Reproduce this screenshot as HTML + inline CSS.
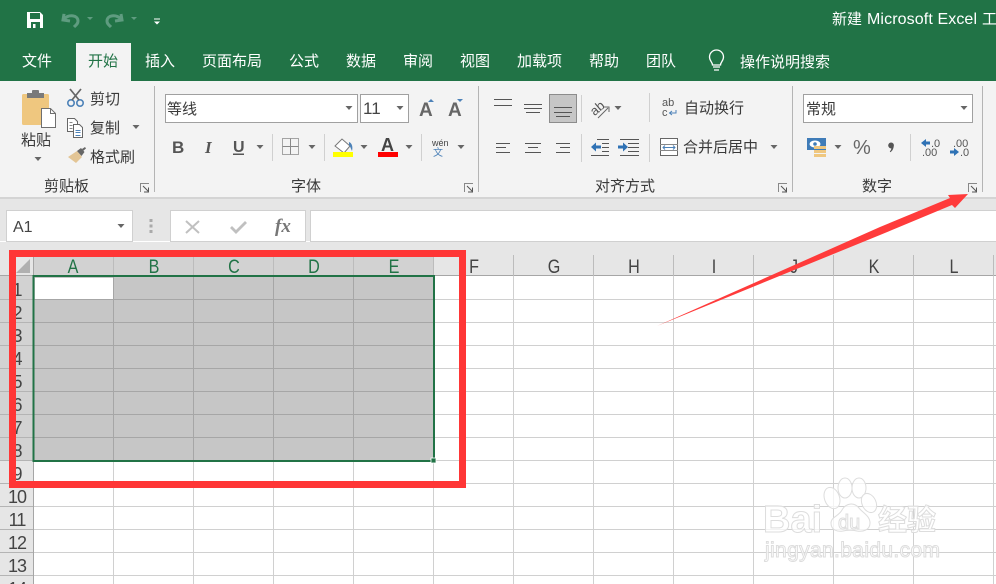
<!DOCTYPE html>
<html><head><meta charset="utf-8"><style>
html,body{margin:0;padding:0;background:#fff;overflow:hidden}
svg{display:block}
text{font-family:"Liberation Sans","Noto Sans CJK SC",sans-serif;fill:#333;font-size:15px}
.tab{fill:#fff;font-size:15px}
.rb{font-size:15px;fill:#3a3a3a}
.col{font-size:19px;text-anchor:middle;fill:#444;transform-box:fill-box;transform-origin:center;transform:scaleX(.85)}
.cs{fill:#217346}
.row{font-size:18px;text-anchor:middle;fill:#444;letter-spacing:-1px}
.wm{fill:#fff;fill-opacity:.75;stroke:#ddd;stroke-width:1;font-weight:bold}
</style></head><body>
<svg width="996" height="584" viewBox="0 0 996 584" xmlns="http://www.w3.org/2000/svg">
<defs>
<path id="t" d="M-3.500 -2h7l-3.500 4z" fill="#666"/>
<g id="dl"><path d="M.5 9V.5H9" fill="none" stroke="#888"/><path d="M3 3l5.500 5.500M8.500 4.500v4.500h-4.500" fill="none" stroke="#555"/></g>
</defs>
<rect width="996" height="584" fill="#fff"/>
<!-- title/tab band -->
<rect width="996" height="81" fill="#217346"/>
<rect x="76" y="43" width="55" height="38" fill="#f3f3f3"/>
<!-- QAT -->
<path d="M27 12h13l3 3v13H27z" fill="#fff"/><rect x="30" y="13" width="10" height="6" fill="#217346"/><rect x="31" y="22" width="9" height="6" fill="#217346"/><rect x="33" y="24" width="2.500" height="4" fill="#fff"/>
<path d="M64 15v-1l-1 6 7 1M64 19c5-5 14-4 14 2 0 3-2 4-4 6" fill="none" stroke="#5f9c80" stroke-width="3"/>
<path d="M121 14l1 6-7 1M121 19c-5-5-14-4-14 2 0 3 2 4 4 6" fill="none" stroke="#5f9c80" stroke-width="3"/>
<path d="M87 17h6l-3 3z M131 17h6l-3 3z" fill="#5f9c80"/>
<path d="M154 18.500h6v1h-6z M154 21.500h6l-3 3z" fill="#fff"/>
<text x="832" y="24" style="fill:#fff">新建</text>
<text x="867" y="24" style="fill:#fff;font-size:16px" textLength="110">Microsoft Excel</text>
<text x="982" y="24" style="fill:#fff">工</text>
<text class="tab" x="22" y="66">文件</text>
<text class="tab" x="88" y="66" style="fill:#217346">开始</text>
<text class="tab" x="145" y="66">插入</text>
<text class="tab" x="202" y="66">页面布局</text>
<text class="tab" x="289" y="66">公式</text>
<text class="tab" x="346" y="66">数据</text>
<text class="tab" x="403" y="66">审阅</text>
<text class="tab" x="460" y="66">视图</text>
<text class="tab" x="517" y="66">加载项</text>
<text class="tab" x="589" y="66">帮助</text>
<text class="tab" x="646" y="66">团队</text>
<text class="tab" x="740" y="67">操作说明搜索</text>
<path d="M712.500 65c0-3-3-4-3-8a6.500 6.500 0 0 1 14 0c0 4-3 5-3 8z" fill="none" stroke="#fff" stroke-width="1.300"/><path d="M713 67h7M714 70h5" stroke="#fff" stroke-width="1.300"/>
<!-- ribbon -->
<rect y="81" width="996" height="116" fill="#f3f3f3"/>
<rect y="197" width="996" height="2" fill="#d4d4d4"/>
<rect y="199" width="996" height="42" fill="#e6e6e6"/>
<path d="M154.500 86v106M478.500 86v106M792.500 86v106M982.500 86v106" stroke="#b4b4b4" stroke-width="1"/>
<!-- clipboard -->
<rect x="22" y="94" width="27" height="31" rx="1.500" fill="#efc77f"/>
<rect x="27" y="93" width="17" height="5" fill="#7a7a7a"/><rect x="32" y="90" width="7" height="4" rx="1" fill="#7a7a7a"/>
<path d="M41.500 108.500h9l5 5v14h-14z" fill="#fff" stroke="#6f6f6f"/><path d="M50.500 108.500v5h5" fill="none" stroke="#6f6f6f"/>
<text class="rb" x="21" y="145">粘贴</text>
<use href="#t" x="38" y="159"/>
<circle cx="71" cy="103" r="3.200" fill="none" stroke="#4d82b8" stroke-width="1.600"/><circle cx="80" cy="103" r="3.200" fill="none" stroke="#4d82b8" stroke-width="1.600"/>
<path d="M72 100L81 89M79 100L70 89" stroke="#666" stroke-width="1.700"/>
<text class="rb" x="90" y="104">剪切</text>
<path d="M67.500 118.500h7l3 3v10h-10z" fill="#fff" stroke="#666"/><path d="M73.500 124.500h6l3 3v10h-9z" fill="#fff" stroke="#666"/><path d="M75.500 130.500h5M75.500 132.500h5M75.500 135.500h5" stroke="#4d82b8"/><path d="M69.500 122.500h3M69.500 125.500h3M69.500 128.500h3" stroke="#888"/>
<text class="rb" x="90" y="133">复制</text>
<use href="#t" x="136" y="127"/>
<path d="M68 157l9-6 5 6-6 6z" fill="#e3c595"/><path d="M77 151l4-3 3.500 4-3 4z" fill="#666"/><path d="M82 149l3-2 1 1.500-3 2.500z" fill="#666"/>
<text class="rb" x="90" y="162">格式刷</text>
<text class="rb" x="44" y="191">剪贴板</text>
<use href="#dl" x="140" y="183"/>
<!-- font -->
<rect x="165.500" y="94.500" width="192" height="28" fill="#fff" stroke="#a0a0a0"/>
<text class="rb" x="167" y="114">等线</text>
<use href="#t" x="349" y="108"/>
<rect x="360.500" y="94.500" width="48" height="28" fill="#fff" stroke="#a0a0a0"/>
<text x="363" y="114" style="font-size:17px;fill:#444">11</text>
<use href="#t" x="400" y="108"/>
<text x="419" y="116" style="font-size:19px;fill:#666;font-weight:bold">A</text>
<path d="M428 102h6l-3-3z" fill="#4d82b8"/>
<text x="448" y="116" style="font-size:19px;fill:#666;font-weight:bold">A</text>
<path d="M457 99h6l-3 3z" fill="#4d82b8"/>
<text x="172" y="153" style="font-size:17px;font-weight:bold;fill:#555">B</text>
<text x="205" y="153" style="font-size:17px;font-weight:bold;font-style:italic;font-family:'Liberation Serif',serif;fill:#555">I</text>
<text x="233" y="152" style="font-size:16px;font-weight:bold;fill:#555">U</text>
<rect x="233" y="153.500" width="11" height="1.500" fill="#555"/>
<use href="#t" x="260" y="147"/>
<rect x="282.500" y="138.500" width="16" height="16" fill="none" stroke="#555" stroke-dasharray="1 1"/>
<path d="M282.500 146.500h16M290.500 138.500v16" stroke="#888"/>
<use href="#t" x="312" y="147"/>
<path d="M272.500 134v27M324.500 134v27M421.500 134v27" stroke="#d0d0d0"/>
<path d="M335 146l7-7 8 7-6 7z" fill="#fff" stroke="#777"/><path d="M349 142c3 1 4 5 3 9-1-2-2-5-3-6z" fill="#4d82b8"/>
<rect x="333" y="152" width="20" height="5" fill="#ff0"/>
<text x="381" y="151" style="font-size:18px;font-weight:bold;fill:#444">A</text>
<rect x="378" y="152" width="20" height="5" fill="#f00"/>
<use href="#t" x="364" y="147"/>
<use href="#t" x="409" y="147"/>
<text x="432" y="146" style="font-size:9px;fill:#444">wén</text>
<text x="433" y="156" style="font-size:10px;fill:#4d82b8">文</text>
<use href="#t" x="461" y="147"/>
<text class="rb" x="291" y="191">字体</text>
<use href="#dl" x="464" y="183"/>
<!-- align -->
<path d="M494 99.500h18M494 105.500h18" stroke="#555"/>
<path d="M524 104.500h18M524 108.500h18M526 112.500h14" stroke="#555"/>
<rect x="549.500" y="94.500" width="27" height="28" fill="#c6c6c6" stroke="#8c8c8c"/>
<path d="M554 107.500h18M554 112.500h18M556 116.500h14" stroke="#555"/>
<path d="M581.500 95v27M581.500 134v28M649.500 93v29M649.500 134v28" stroke="#d0d0d0"/>
<text x="590" y="112" transform="rotate(-40 598 108)" style="font-size:13px;fill:#555">ab</text>
<path d="M598 118l10-10M604 107h5v5" fill="none" stroke="#666"/>
<use href="#t" x="618" y="108"/>
<path d="M496 143.500h14M496 147.500h10M496 152.500h14" stroke="#555"/>
<path d="M525 143.500h16M528 147.500h10M525 152.500h16" stroke="#555"/>
<path d="M556 143.500h14M560 147.500h10M556 152.500h14" stroke="#555"/>
<path d="M597 139.500h12M602 143.500h7M602 147.500h7M602 151.500h7M591 155.500h18" stroke="#555"/><path d="M591 147l5-4.500v3h5v3h-5v3z" fill="#2f72b5"/>
<path d="M620 139.500h19M628 143.500h11M628 147.500h11M628 151.500h11M620 155.500h19" stroke="#555"/><path d="M628 147l-5-4.500v3h-5v3h5v3z" fill="#2f72b5"/>
<text x="662" y="106" style="font-size:11px;fill:#555">ab</text><text x="662" y="116" style="font-size:11px;fill:#555">c</text>
<path d="M676 110v3h-6M672 111l-2.500 2 2.500 2" fill="none" stroke="#4d82b8"/>
<text class="rb" x="684" y="113">自动换行</text>
<rect x="660.500" y="138.500" width="17" height="17" fill="#fff" stroke="#666"/>
<path d="M660 144.500h18M660 150.500h18" stroke="#888"/>
<rect x="661" y="145" width="16" height="5" fill="#fff"/>
<path d="M663 147.500h12M665 145.500l-2 2 2 2M673 145.500l2 2-2 2" fill="none" stroke="#4d82b8"/>
<text class="rb" x="683" y="152">合并后居中</text>
<use href="#t" x="774" y="147"/>
<text class="rb" x="595" y="191">对齐方式</text>
<use href="#dl" x="778" y="183"/>
<!-- number -->
<rect x="803.500" y="94.500" width="169" height="28" fill="#fff" stroke="#a0a0a0"/>
<text class="rb" x="806" y="114">常规</text>
<use href="#t" x="964" y="108"/>
<rect x="807" y="138" width="19" height="12" fill="#3f7cb8"/><ellipse cx="815" cy="144" rx="5.500" ry="3.500" fill="#fff"/><circle cx="815" cy="144" r="1.800" fill="#3f7cb8"/>
<rect x="814" y="146" width="12" height="3" fill="#efc77f"/><rect x="814" y="150" width="12" height="3" fill="#efc77f"/><rect x="814" y="154" width="12" height="3" fill="#efc77f"/>
<use href="#t" x="838" y="147"/>
<text x="853" y="154" style="font-size:20px;fill:#666">%</text>
<path d="M891 142.500a2.800 2.800 0 0 1 2.800 3.500c-.3 2.800-1.500 5-3.500 6.200l-.5-.8c1-1 1.500-2 1.500-3a2.800 2.800 0 0 1-.3-5.900z" fill="#555"/>
<path d="M910.500 134v27" stroke="#d0d0d0"/>
<path d="M921 143l5-4v2.500h4v3h-4v2.500z" fill="#2f72b5"/>
<text x="931" y="147" style="font-size:11px;fill:#555">.0</text>
<text x="922" y="156" style="font-size:11px;fill:#555">.00</text>
<text x="953" y="147" style="font-size:11px;fill:#555">.00</text>
<path d="M959 152l-5-4v2.500h-4v3h4v2.500z" fill="#2f72b5" transform="translate(0 0)"/>
<text x="960" y="156" style="font-size:11px;fill:#555">.0</text>
<text class="rb" x="862" y="191">数字</text>
<use href="#dl" x="968" y="183"/>
<!-- formula bar -->
<rect x="6.500" y="210.500" width="126" height="31" fill="#fff" stroke="#d0d0d0"/>
<text x="13" y="232" style="font-size:16px;fill:#444">A1</text>
<use href="#t" x="121" y="226"/>
<path d="M149.500 219h3v3h-3zM149.500 224.500h3v3h-3zM149.500 230h3v3h-3z" fill="#aaa"/>
<rect x="170.500" y="210.500" width="135" height="31" fill="#fff" stroke="#d0d0d0"/>
<path d="M186 221l13 12M199 221l-13 12" stroke="#c0c0c0" stroke-width="2"/>
<path d="M231 227l5 5 10-10" fill="none" stroke="#c0c0c0" stroke-width="2.800"/>
<text x="275" y="232" style="font-size:19px;font-style:italic;font-weight:bold;font-family:'Liberation Serif',serif;fill:#777">fx</text>
<rect x="310.500" y="210.500" width="690" height="31" fill="#fff" stroke="#d0d0d0"/>
<!-- headers -->
<rect y="242" width="996" height="34" fill="#e6e6e6"/>
<rect y="276" width="33" height="308" fill="#e6e6e6"/>
<rect x="33" y="254" width="400" height="22" fill="#d2d2d2"/>
<rect y="276" width="33" height="184" fill="#d2d2d2"/>
<path d="M16 273L30 259v14z" fill="#b0b0b0"/>
<path d="M33.500 254v330" stroke="#a6a6a6"/>
<path d="M0 275.500h996" stroke="#a6a6a6"/>
<path d="M113.500 255v21M193.500 255v21M273.500 255v21M353.500 255v21M433.500 255v21M513.500 255v21M593.500 255v21M673.500 255v21M753.500 255v21M833.500 255v21M913.500 255v21M993.500 255v21" stroke="#bcbcbc"/>
<path d="M0 299.500h33M0 322.500h33M0 345.500h33M0 368.500h33M0 391.500h33M0 414.500h33M0 437.500h33M0 460.500h33M0 483.500h33M0 506.500h33M0 529.500h33M0 552.500h33M0 575.500h33" stroke="#b4b4b4"/>
<!-- grid -->
<path d="M34 299.500h962M34 322.500h962M34 345.500h962M34 368.500h962M34 391.500h962M34 414.500h962M34 437.500h962M34 460.500h962M34 483.500h962M34 506.500h962M34 529.500h962M34 552.500h962M34 575.500h962M113.500 276v308M193.500 276v308M273.500 276v308M353.500 276v308M433.500 276v308M513.500 276v308M593.500 276v308M673.500 276v308M753.500 276v308M833.500 276v308M913.500 276v308M993.500 276v308" stroke="#d0d0d0"/>
<rect x="34" y="277" width="399" height="183" fill="#c6c6c6"/>
<path d="M34 299.500h399M34 322.500h399M34 345.500h399M34 368.500h399M34 391.500h399M34 414.500h399M34 437.500h399M113.500 277v183M193.500 277v183M273.500 277v183M353.500 277v183" stroke="#a6a6a6"/>
<rect x="35" y="278" width="78" height="21" fill="#fff"/>
<rect x="33.500" y="276" width="400.500" height="185" fill="none" stroke="#217346" stroke-width="2"/>
<rect x="431" y="458" width="5" height="5" fill="#217346" stroke="#fff" stroke-width=".8"/>
<!-- header labels -->
<text class="col cs" x="73" y="273">A</text><text class="col cs" x="154" y="273">B</text><text class="col cs" x="234" y="273">C</text><text class="col cs" x="314" y="273">D</text><text class="col cs" x="394" y="273">E</text>
<text class="col" x="474" y="273">F</text><text class="col" x="554" y="273">G</text><text class="col" x="634" y="273">H</text><text class="col" x="714" y="273">I</text><text class="col" x="794" y="273">J</text><text class="col" x="874" y="273">K</text><text class="col" x="954" y="273">L</text>
<text class="row cs" x="17" y="296">1</text><text class="row cs" x="17" y="319">2</text><text class="row cs" x="17" y="342">3</text><text class="row cs" x="17" y="365">4</text><text class="row cs" x="17" y="388">5</text><text class="row cs" x="17" y="411">6</text><text class="row cs" x="17" y="434">7</text><text class="row cs" x="17" y="457">8</text>
<text class="row" x="17" y="480">9</text><text class="row" x="17" y="503">10</text><text class="row" x="17" y="526">11</text><text class="row" x="17" y="549">12</text><text class="row" x="17" y="572">13</text><text class="row" x="17" y="595">14</text>
<!-- watermark -->
<g>
<text class="wm" x="763" y="532" style="font-size:38px">Bai</text>
<ellipse cx="832" cy="498" rx="7.500" ry="11" fill="#fff" fill-opacity=".75" stroke="#ddd" transform="rotate(-20 832 498)"/>
<ellipse cx="845" cy="488" rx="7" ry="10" fill="#fff" fill-opacity=".75" stroke="#ddd"/>
<ellipse cx="859" cy="488" rx="7" ry="10" fill="#fff" fill-opacity=".75" stroke="#ddd"/>
<ellipse cx="869" cy="503" rx="7" ry="10" fill="#fff" fill-opacity=".75" stroke="#ddd" transform="rotate(-25 869 503)"/>
<path d="M842 510c4-7 12-8 17-2 4 5 11 8 11 15 0 7-7 9-13 8-5-1-9-1-14 0-6 1-12-1-12-8 0-6 8-7 11-13z" fill="#fff" fill-opacity=".75" stroke="#ddd"/>
<text class="wm" x="838" y="529" style="font-size:20px;font-weight:normal">du</text>
<text class="wm" x="878" y="530" style="font-size:29px;font-family:'Noto Sans CJK SC',sans-serif">经验</text>
<text class="wm" x="765" y="557" style="font-size:21px;font-weight:normal" textLength="175">jingyan.baidu.com</text>
</g>
<!-- red box -->
<rect x="12.500" y="253.500" width="450" height="231" fill="none" stroke="#ff3636" stroke-width="7"/>
<!-- arrow -->
<path d="M657 326L880 227L950 198L948 195L968 194L955 208L952 205L880 235Z" fill="#ff3b3b"/>
</svg>
</body></html>
